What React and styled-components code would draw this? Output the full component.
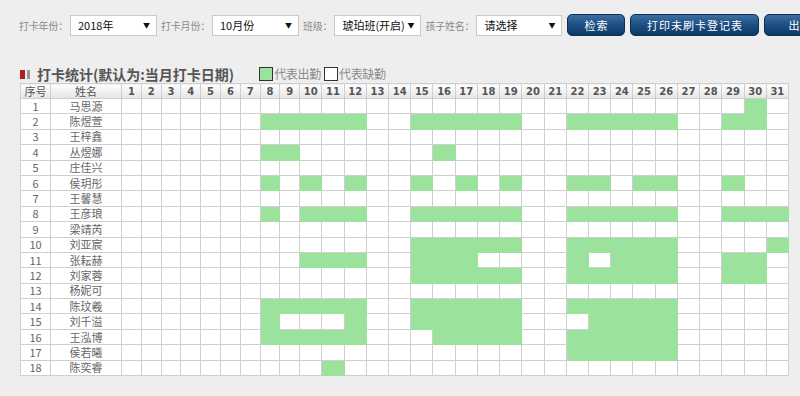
import React from 'react';
import styled, { createGlobalStyle } from 'styled-components';

const GlobalStyle = createGlobalStyle`
  html, body {
    margin: 0;
    padding: 0;
    background: #eeeeee;
    font-family: "Noto Sans CJK SC", "Liberation Sans", sans-serif;
  }
`;

const Page = styled.div`
  width: 800px;
  height: 396px;
  overflow: hidden;
  padding: 14px 12px 0 19px;
  box-sizing: border-box;
`;

const Toolbar = styled.div`
  display: flex;
  align-items: center;
  height: 22px;
  white-space: nowrap;
`;

const Label = styled.span`
  flex-shrink: 0;
  font-size: 10px;
  letter-spacing: -0.2px;
  color: #8a8a8a;
  margin: 0 2px 0 4px;
  &:first-child {
    margin-left: 0;
  }
`;

const Select = styled.div`
  width: ${(p) => p.w}px;
  height: 21px;
  box-sizing: border-box;
  display: flex;
  align-items: center;
  justify-content: space-between;
  padding: 0 6px 0 7px;
  background: #fff;
  border: 1px solid #c9c9c9;
  font-size: 11px;
  color: #111;
  flex-shrink: 0;
`;

const Arrow = styled.span`
  font-size: 7px;
  color: #111;
`;

const Button = styled.div`
  flex-shrink: 0;
  width: ${(p) => p.w}px;
  height: 22px;
  box-sizing: border-box;
  margin-left: 5px;
  display: flex;
  align-items: center;
  justify-content: center;
  border-radius: 5px;
  border: 1px solid #0b2f55;
  background: linear-gradient(#3d6fa0 0%, #1f5186 45%, #0e3963 100%);
  color: #fff;
  font-size: 11px;
  letter-spacing: 1px;
`;

const TitleRow = styled.div`
  display: flex;
  align-items: flex-end;
  margin-top: 28px;
  height: 20px;
`;

const TitleMark = styled.span`
  display: flex;
  gap: 2px;
  margin-left: 1px;
  margin-right: 7px;
  margin-bottom: 5px;
  span {
    width: 5px;
    height: 9px;
    background: #b41e1e;
  }
  span + span {
    width: 3px;
    background: #9a9a9a;
  }
`;

const Title = styled.span`
  font-size: 14px;
  font-weight: 700;
  color: #555;
  line-height: 20px;
`;

const Legend = styled.span`
  display: flex;
  align-items: center;
  margin-left: ${(p) => p.gap}px;
  margin-bottom: 2px;
  font-size: 12px;
  letter-spacing: -0.3px;
  color: #8a8a8a;
`;

const Swatch = styled.span`
  width: 12px;
  height: 12px;
  border: 1px solid #333;
  background: ${(p) => (p.on ? '#9be39c' : '#fff')};
  margin-right: 1px;
`;

const Table = styled.table`
  border-collapse: collapse;
  table-layout: fixed;
  width: 768px;
  margin-left: 1px;
  margin-top: -1px;
  background: #fff;
`;

const Th = styled.th`
  height: 14px;
  padding: 0;
  border: 1px solid #cfcfcf;
  background: linear-gradient(#ffffff, #e4e4e4);
  font-size: ${(p) => (p.num ? 10 : 11)}px;
  font-weight: ${(p) => (p.num ? 700 : 400)};
  font-family: ${(p) =>
    p.num ? '"DejaVu Sans", Verdana, sans-serif' : '"Noto Sans CJK SC", sans-serif'};
  color: #555;
  line-height: 13px;
  text-align: center;
  overflow: hidden;
`;

const Td = styled.td`
  height: 14.4px;
  padding: 0;
  border: 1px solid #cfcfcf;
  font-size: 11px;
  color: #666;
  line-height: 13px;
  text-align: center;
  white-space: nowrap;
  overflow: hidden;
`;

const Day = styled.td`
  height: 14.4px;
  padding: 0;
  border: 1px solid ${(p) => (p.on ? '#9be39c' : '#cfcfcf')};
  background: ${(p) => (p.on ? '#9be39c' : '#fff')};
`;

const days = Array.from({ length: 31 }, (_, i) => i + 1);

const rows = [
  ['马思源', [30]],
  ['陈煜萱', [8, 9, 10, 11, 12, 15, 16, 17, 18, 19, 22, 23, 24, 25, 26, 29, 30]],
  ['王梓鑫', []],
  ['丛煜娜', [8, 9, 16]],
  ['庄佳兴', []],
  ['侯玥彤', [8, 10, 12, 15, 17, 19, 22, 23, 25, 26, 29]],
  ['王馨慧', []],
  ['王彦琅', [8, 10, 11, 12, 15, 16, 17, 18, 19, 22, 23, 24, 25, 26, 29, 30, 31]],
  ['梁靖芮', []],
  ['刘亚宸', [15, 16, 17, 18, 19, 22, 23, 24, 25, 26, 31]],
  ['张耘赫', [10, 11, 12, 15, 16, 17, 22, 24, 25, 26, 29, 30]],
  ['刘家蓉', [15, 16, 17, 18, 19, 22, 23, 24, 25, 26, 29, 30]],
  ['杨妮可', []],
  ['陈玟羲', [8, 9, 10, 11, 12, 15, 16, 17, 18, 19, 22, 23, 24, 25, 26]],
  ['刘千溢', [8, 12, 15, 16, 17, 18, 19, 23, 24, 25, 26]],
  ['王泓博', [8, 9, 10, 11, 12, 16, 17, 18, 19, 22, 23, 24, 25, 26]],
  ['侯若曦', [22, 23, 24, 25, 26]],
  ['陈奕睿', [11]],
];

const colWidth = (d) => (d < 10 ? 19.8 : 22.23);

export default function App() {
  return (
    <Page>
      <GlobalStyle />
      <Toolbar>
        <Label>打卡年份：</Label>
        <Select w={87}>
          2018年<Arrow>▼</Arrow>
        </Select>
        <Label>打卡月份：</Label>
        <Select w={87}>
          10月份<Arrow>▼</Arrow>
        </Select>
        <Label>班级：</Label>
        <Select w={87}>
          琥珀班(开启)<Arrow>▼</Arrow>
        </Select>
        <Label>孩子姓名：</Label>
        <Select w={86}>
          请选择<Arrow>▼</Arrow>
        </Select>
        <Button w={58}>检索</Button>
        <Button w={129}>打印未刷卡登记表</Button>
        <Button w={96}>出勤统计</Button>
      </Toolbar>

      <TitleRow>
        <TitleMark>
          <span />
          <span />
        </TitleMark>
        <Title>打卡统计(默认为:当月打卡日期)</Title>
        <Legend gap={25}>
          <Swatch on />
          代表出勤
        </Legend>
        <Legend gap={3}>
          <Swatch />
          代表缺勤
        </Legend>
      </TitleRow>

      <Table>
        <colgroup>
          <col style={{ width: 30 }} />
          <col style={{ width: 71 }} />
          {days.map((d) => (
            <col key={d} style={{ width: colWidth(d) }} />
          ))}
        </colgroup>
        <thead>
          <tr>
            <Th>序号</Th>
            <Th>姓名</Th>
            {days.map((d) => (
              <Th num key={d}>
                {d}
              </Th>
            ))}
          </tr>
        </thead>
        <tbody>
          {rows.map(([name, present], i) => (
            <tr key={name}>
              <Td>{i + 1}</Td>
              <Td>{name}</Td>
              {days.map((d) => (
                <Day key={d} on={present.includes(d) ? 1 : 0} />
              ))}
            </tr>
          ))}
        </tbody>
      </Table>
    </Page>
  );
}
